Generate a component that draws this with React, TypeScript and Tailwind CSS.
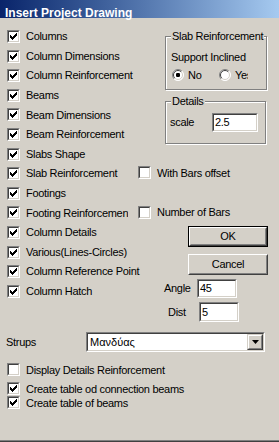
import type { ReactNode } from 'react'

const leftItems = [
  'Columns',
  'Column Dimensions',
  'Column Reinforcement',
  'Beams',
  'Beam Dimensions',
  'Beam Reinforcement',
  'Slabs Shape',
  'Slab Reinforcement',
  'Footings',
  'Footing Reinforcement',
  'Column Details',
  'Various(Lines-Circles)',
  'Column Reference Point',
  'Column Hatch',
]

function Check({ on }: { on?: boolean }) {
  return (
    <span className="flex size-[13px] shrink-0 border border-t-[#808080] border-l-[#808080] border-r-white border-b-white">
      <span className="flex size-full items-center justify-center border border-t-[#404040] border-l-[#404040] border-r-[#d4d0c8] border-b-[#d4d0c8] bg-white">
        {on && (
          <svg width="7" height="7" viewBox="0 0 7 7">
            <path
              d="M0 2h1v3H0z M1 3h1v3H1z M2 4h1v3H2z M3 3h1v3H3z M4 2h1v3H4z M5 1h1v3H5z M6 0h1v3H6z"
              fill="#000"
            />
          </svg>
        )}
      </span>
    </span>
  )
}

function Radio({ on }: { on?: boolean }) {
  return (
    <svg width="12" height="12" viewBox="0 0 12 12" className="shrink-0">
      <circle cx="6" cy="6" r="5.5" fill="#fff" />
      <path d="M2.1 9.9 A5.5 5.5 0 0 1 9.9 2.1" stroke="#808080" fill="none" />
      <path d="M9.9 2.1 A5.5 5.5 0 0 1 2.1 9.9" stroke="#fff" fill="none" />
      <path d="M2.8 9.2 A4.5 4.5 0 0 1 9.2 2.8" stroke="#404040" fill="none" />
      <path d="M9.2 2.8 A4.5 4.5 0 0 1 2.8 9.2" stroke="#d4d0c8" fill="none" />
      {on && <rect x="4" y="4" width="4" height="4" rx="1.2" fill="#000" />}
    </svg>
  )
}

function Group({ title, className, children }: { title: string; className: string; children?: ReactNode }) {
  return (
    <div className={`relative border border-[#808080] shadow-[inset_1px_1px_0_#fff,1px_1px_0_#fff] ${className}`}>
      <span className="absolute -top-[7px] left-[5px] bg-[#d4d0c8] px-[1px] leading-[13px] whitespace-nowrap">{title}</span>
      {children}
    </div>
  )
}

function Field({ value, className }: { value: string; className: string }) {
  return (
    <div className={`shrink-0 border border-t-[#808080] border-l-[#808080] border-r-white border-b-white ${className}`}>
      <div className="flex h-full items-center border border-t-[#404040] border-l-[#404040] border-r-[#d4d0c8] border-b-[#d4d0c8] bg-white pl-[1px]">
        {value}
      </div>
    </div>
  )
}

function Button({ label, def, className }: { label: string; def?: boolean; className: string }) {
  const face = (
    <div className="h-full border border-t-white border-l-white border-r-[#404040] border-b-[#404040]">
      <div className="flex h-full items-center justify-center border border-t-[#d4d0c8] border-l-[#d4d0c8] border-r-[#808080] border-b-[#808080]">
        {label}
      </div>
    </div>
  )
  return def ? <div className={`border border-black ${className}`}>{face}</div> : <div className={className}>{face}</div>
}

export default function App() {
  return (
    <div className="flex h-[442px] w-[279px] flex-col overflow-hidden bg-[#d4d0c8] font-['Liberation_Sans',Arial,sans-serif] text-[11px] tracking-[-0.3px] text-black shadow-[inset_0_-1px_0_#404040,inset_0_-2px_0_#808080]">
      {/* Title bar */}
      <div className="h-[18px] shrink-0 bg-gradient-to-r from-[#0a246a] to-[#a6caf0] pl-[5px] pt-[6.7px] text-[12px] leading-[12px] font-bold tracking-normal text-white">
        Insert Project Drawing
      </div>

      <div className="flex">
        {/* Left checkbox list */}
        <div className="flex w-[135px] shrink-0 flex-col pt-[8.7px]">
          {leftItems.map((t) => (
            <div key={t} className="flex h-[19.6px] items-center gap-[6px] pl-[7px] whitespace-nowrap">
              <Check on />
              {t === 'Footing Reinforcement' ? (
                <span className="w-[102px] overflow-hidden">{t}</span>
              ) : (
                <span>{t}</span>
              )}
            </div>
          ))}
        </div>

        {/* Right side controls */}
        <div className="flex flex-col">
          <Group title="Slab Reinforcement" className="ml-[30px] mt-[18px] h-[54px] w-[102px]">
            <div className="pl-[5px] pt-[13.5px] leading-[13px] whitespace-nowrap">Support Inclined</div>
            <div className="mt-[5px] flex h-[13px] items-center pl-[6px]">
              <div className="flex w-[47px] items-center gap-[4px]">
                <Radio on />
                <span>No</span>
              </div>
              <div className="flex items-center gap-[4px]">
                <Radio />
                <span className="w-[13px] overflow-hidden whitespace-nowrap">Yes</span>
              </div>
            </div>
          </Group>

          <Group title="Details" className="ml-[30px] mt-[11px] h-[43px] w-[101px]">
            <div className="flex items-center pl-[4px] pt-[11px]">
              <span className="w-[42px]">scale</span>
              <Field value="2.5" className="h-[19px] w-[46px]" />
            </div>
          </Group>

          <div className="mt-[19.2px] flex h-[19.6px] items-center gap-[6px] pl-[3px] whitespace-nowrap">
            <Check />
            <span>With Bars offset</span>
          </div>
          <div className="mt-[19.6px] flex h-[19.6px] items-center gap-[6px] pl-[3px] whitespace-nowrap">
            <Check />
            <span>Number of Bars</span>
          </div>

          <Button label="OK" def className="ml-[53px] mt-[4px] h-[21px] w-[80px]" />
          <Button label="Cancel" className="ml-[53px] mt-[7px] h-[21px] w-[80px]" />

          <div className="ml-[29px] mt-[4px] flex items-center">
            <span className="w-[33px]">Angle</span>
            <Field value="45" className="h-[19px] w-[40px]" />
          </div>
          <div className="ml-[33px] mt-[4px] flex items-center">
            <span className="w-[31px]">Dist</span>
            <Field value="5" className="h-[20px] w-[40px]" />
          </div>
        </div>
      </div>

      {/* Strups combo */}
      <div className="mt-[10px] flex items-center">
        <span className="w-[86px] pl-[6px]">Strups</span>
        <div className="h-[20px] w-[179px] border border-t-[#808080] border-l-[#808080] border-r-white border-b-white">
          <div className="flex h-full items-center border border-t-[#404040] border-l-[#404040] border-r-[#d4d0c8] border-b-[#d4d0c8] bg-white">
            <span className="flex-1 pl-[2px] tracking-normal">Μανδύας</span>
            <div className="h-full w-[16px] border border-t-[#d4d0c8] border-l-[#d4d0c8] border-r-[#404040] border-b-[#404040]">
              <div className="flex h-full items-center justify-center border border-t-white border-l-white border-r-[#808080] border-b-[#808080] bg-[#d4d0c8]">
                <svg width="7" height="4" viewBox="0 0 7 4">
                  <path d="M0 0h7L3.5 4z" fill="#000" />
                </svg>
              </div>
            </div>
          </div>
        </div>
      </div>

      {/* Bottom checkboxes */}
      <div className="mt-[11px] flex flex-col">
        <div className="flex h-[14px] items-center gap-[6px] pl-[7px] whitespace-nowrap">
          <Check />
          <span>Display Details Reinforcement</span>
        </div>
        <div className="mt-[5px] flex h-[14px] items-center gap-[6px] pl-[7px] whitespace-nowrap">
          <Check on />
          <span>Create table od connection beams</span>
        </div>
        <div className="flex h-[14px] items-center gap-[6px] pl-[7px] whitespace-nowrap">
          <Check on />
          <span>Create table of beams</span>
        </div>
      </div>
    </div>
  )
}
